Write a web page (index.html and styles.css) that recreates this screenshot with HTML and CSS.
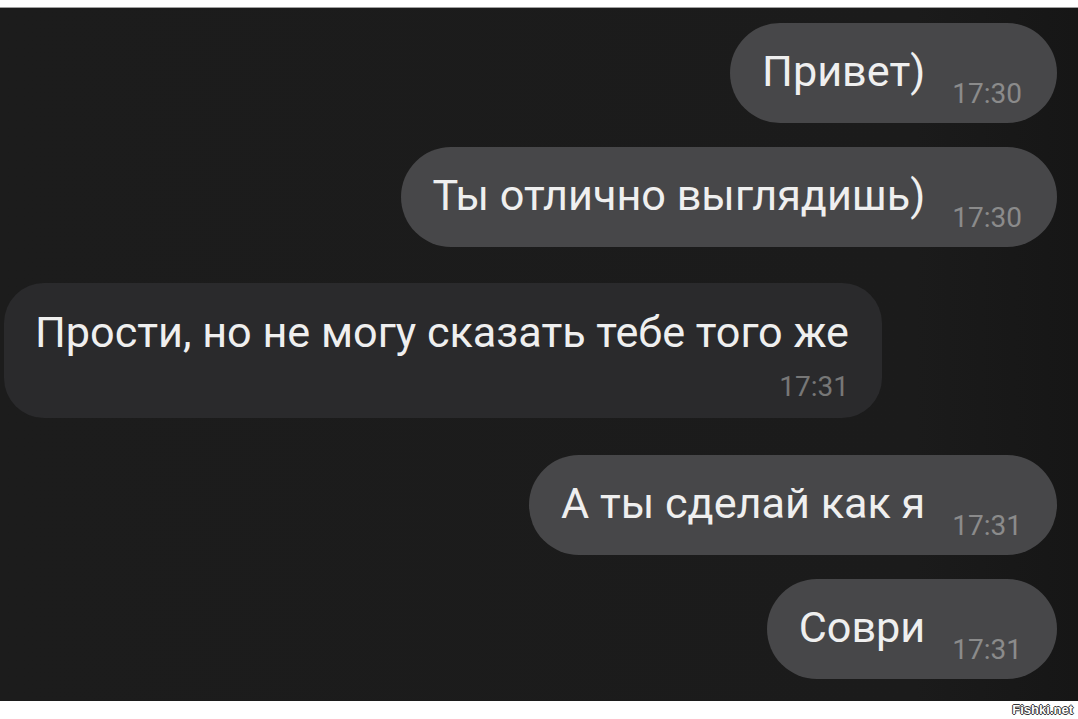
FILE: index.html
```html
<!DOCTYPE html>
<html lang="ru">
<head>
  <meta charset="UTF-8">
  <title>Переписка</title>
  <link rel="stylesheet" href="styles.css">
</head>
<body>
<div class="screen">
  <div class="msg out first">
    <span class="text">Привет)</span>
    <span class="time">17:30</span>
  </div>
  <div class="msg out">
    <span class="text">Ты отлично выглядишь)</span>
    <span class="time">17:30</span>
  </div>
  <div class="msg in">
    <span class="text">Прости, но не могу сказать тебе того же</span>
    <span class="time">17:31</span>
  </div>
  <div class="msg out">
    <span class="text">А ты сделай как я</span>
    <span class="time">17:31</span>
  </div>
  <div class="msg out">
    <span class="text">Соври</span>
    <span class="time">17:31</span>
  </div>
</div>
<div class="footer">
  <span class="mark">Fishki.net</span>
</div>
</body>
</html>
```

FILE: styles.css
```css
html, body {
  margin: 0;
  background: #ffffff;
}
body {
  font-family: Roboto, "Noto Sans", sans-serif;
  padding-top: 7px;
}
.screen {
  height: 694px;
  box-sizing: border-box;
  border-top: 1px solid #a0a0a0;
  background: linear-gradient(to right, #1c1c1c 0%, #1b1b1b 85%, #161616 100%);
  display: flex;
  flex-direction: column;
  padding-top: 15px;
}
.msg {
  box-sizing: border-box;
  display: flex;
  color: #efefef;
}
.msg .text {
  font-size: 43.2px;
  line-height: 52px;
}
.msg .time {
  font-size: 28px;
  line-height: 32px;
}

/* outgoing */
.out {
  align-self: flex-end;
  margin-right: 21px;
  margin-top: 24px;
  height: 100px;
  padding: 23px 35px 0 32px;
  border-radius: 50px;
  background: #474749;
  align-items: flex-start;
}
.out.first {
  margin-top: 0;
}
.out .time {
  color: #8b8b8b;
  margin-left: 27px;
  margin-top: 32px;
}

/* incoming */
.in {
  align-self: flex-start;
  margin-left: 4px;
  margin-top: 36px;
  margin-bottom: 13px;
  height: 135px;
  padding: 24px 33px 0 31px;
  border-radius: 40px;
  background: #2a2a2c;
  flex-direction: column;
}
.in .time {
  align-self: flex-end;
  color: #777777;
  margin-top: 12px;
}

.footer {
  height: 17px;
  display: flex;
  justify-content: flex-end;
  align-items: center;
  padding-right: 5px;
}
.mark {
  font-family: "Liberation Sans", Arial, sans-serif;
  font-weight: bold;
  font-size: 13px;
  color: #ffffff;
  text-shadow: -1px 0 #333, 1px 0 #333, 0 -1px #333, 0 1px #333;
}
```
